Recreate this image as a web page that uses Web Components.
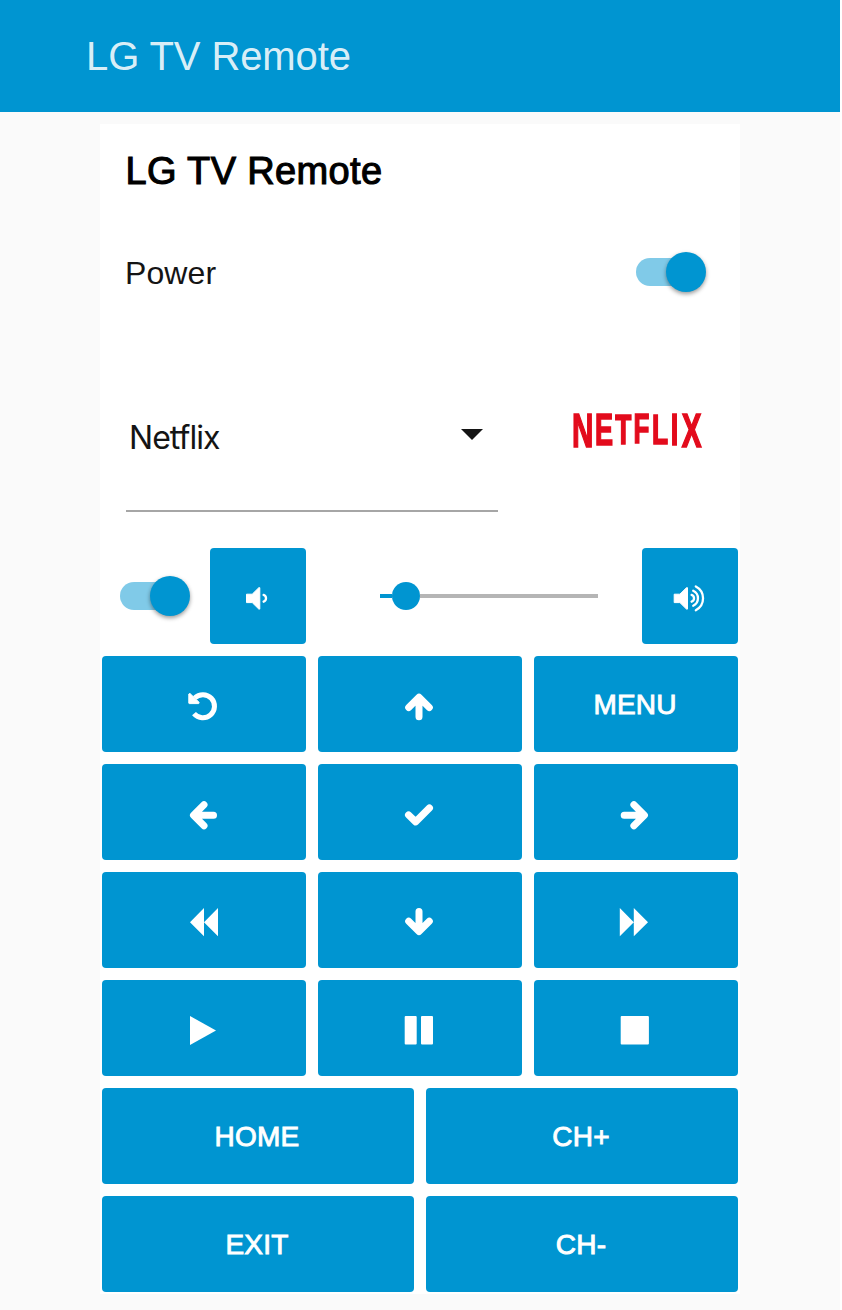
<!DOCTYPE html>
<html lang="en">
<head>
<meta charset="utf-8">
<title>LG TV Remote</title>
<style>
  html, body { margin: 0; background: #fff; }
  body { font-family: "Liberation Sans", Arial, sans-serif; }
</style>
</head>
<body>
<remote-page></remote-page>
<script>
const define = (name, html, setup) => {
  const template = document.createElement('template');
  template.innerHTML = html;
  customElements.define(name, class extends HTMLElement {
    constructor() {
      super();
      this.attachShadow({ mode: 'open' }).append(template.content.cloneNode(true));
    }
    connectedCallback() { if (setup) setup(this, this.shadowRoot); }
  });
};

const ICONS = {
  undo: '<path d="M8.700 10A11.600 11.600 0 1 1 8 25.700" fill="none" stroke="#fff" stroke-width="5"/><path d="M2.800 6v9a.6.6 0 0 0 .6.6h9.300l.5-1.200-2.700-2.600L4 5.500z" fill="#fff" stroke="#fff" stroke-linejoin="round"/>',
  up: '<path d="M17 28.800V10M6.700 19.500 17 9.200l10.300 10.300" class="arrow"/>',
  down: '<path d="M17 7.500V26M6.700 17.200 17 27.500l10.300-10.300" class="arrow"/>',
  left: '<path d="M27.500 19.300H9M18 8.800 7.500 19.300 18 29.800" class="arrow"/>',
  right: '<path d="M6.200 19.300H25M15.900 8.800 26.400 19.300 15.900 29.800" class="arrow"/>',
  check: '<path d="M6.600 19 13.700 25.800 27.400 12" class="check"/>',
  rewind: '<path d="M18 4v28.300L4 18.200zM32 4v28.300L18 18.200z" fill="#fff"/>',
  forward: '<path d="M1.800 4v28.300l14-14.100zM15.800 4v28.300l14.200-14.100z" fill="#fff"/>',
  play: '<path d="M4 4l26 14.400L4 33z" fill="#fff"/>',
  pause: '<rect x="2.700" y="4" width="12" height="28.600" rx="1" fill="#fff"/><rect x="19" y="4" width="12" height="28.600" rx="1" fill="#fff"/>',
  stop: '<rect x="2.700" y="4" width="28.200" height="28.600" rx="1" fill="#fff"/>',
  low: '<path d="M6.500 14.200h5.700l6.600-6.500h1v21.400h-1l-6.600-6.500H6.500z" class="speaker"/><path d="M23.600 14.900a3.600 3.600 0 0 1 0 6.800" class="wave"/>',
  high: '<path d="M2.200 14.200h5.700l6.600-6.500h1v21.400h-1l-6.600-6.500H2.200z" class="speaker"/><path d="M19.600 14.900a3.600 3.600 0 0 1 0 6.800M21.200 10.800a8.300 8.300 0 0 1 0 15M23.800 6.400a13.400 13.400 0 0 1 0 23.800" class="wave"/>'
};

define('app-bar', `
  <style>
    :host { display: flex; align-items: center; box-sizing: border-box; width: 840px; height: 112px;
      padding: 0 0 0 86px; background: #0095d1; color: rgba(255,255,255,.87); font-size: 40px; line-height: 46px; letter-spacing: -.1px; }
  </style><slot></slot>`);

define('toggle-switch', `
  <style>
    :host { display: flex; align-items: center; width: 70px; height: 40px; flex: none; }
    .track { display: flex; align-items: center; justify-content: flex-end; width: 70px; height: 28px;
      border-radius: 14px; background: linear-gradient(90deg, #80cae8 56px, transparent 56px); }
    .thumb { width: 40px; height: 40px; flex: none; border-radius: 50%; background: #0095d1; box-shadow: 0 2px 4px rgba(0,0,0,.4); }
  </style><div class="track"><div class="thumb"></div></div>`);

define('remote-button', `
  <style>
    :host { display: flex; align-items: center; justify-content: center; box-sizing: border-box; height: 96px;
      border-radius: 4px; background: #0095d1; color: #fff; font-size: 28px; line-height: 32px; letter-spacing: .2px; -webkit-text-stroke: .9px #fff; }
    .label { padding: 1px 2px 0 0; }
    svg { display: block; width: 36px; height: 36px; margin-top: 4px; }
    .arrow { fill: none; stroke: #fff; stroke-width: 7; stroke-linecap: round; stroke-linejoin: round; }
    .check { fill: none; stroke: #fff; stroke-width: 7.2; stroke-linecap: round; stroke-linejoin: round; }
    .speaker { fill: #fff; stroke: #fff; stroke-width: 1; stroke-linejoin: round; }
    .wave { fill: none; stroke: #fff; stroke-width: 2.3; stroke-linecap: round; }
  </style><div class="label"><slot></slot></div>`, (host, root) => {
    const icon = host.getAttribute('icon');
    if (icon) {
      const holder = document.createElement('template');
      holder.innerHTML = '<svg viewBox="0 0 36 36">' + ICONS[icon] + '</svg>';
      root.querySelector('.label').replaceWith(holder.content);
    }
  });

define('volume-slider', `
  <style>
    :host { display: flex; align-items: center; height: 28px; width: 218px; }
    .fill { width: 12px; height: 4px; background: #0095d1; }
    .knob { width: 28px; height: 28px; border-radius: 50%; background: #0095d1; }
    .rest { flex: 1; height: 4px; background: #b5b5b5; }
  </style><div class="fill"></div><div class="knob"></div><div class="rest"></div>`);

define('source-select', `
  <style>
    :host { display: flex; justify-content: space-between; box-sizing: border-box; width: 372px; height: 100px;
      padding: 7px 15px 0 3px; border-bottom: 2px solid #a6a6a6; color: #141414;
      font: 32px/38px Inter, sans-serif; letter-spacing: -.95px; }
    svg { width: 22px; height: 11px; margin-top: 9.500px; }
  </style><slot></slot><svg viewBox="0 0 22 11"><path d="M0 0h22L11 11z" fill="#141414"/></svg>`);

define('netflix-logo', `
  <style>
    :host { display: block; width: 136px; height: 44px; }
    svg { display: block; overflow: visible; filter: blur(.6px); }
    text { font-family: "Liberation Sans", sans-serif; font-weight: 700; fill: #e30b1c; stroke: #e30b1c; stroke-width: 1.7px; }
  </style>
  <svg width="136" height="44" viewBox="0 0 136 44"><text transform="scale(.61 1)"><tspan x="3.200" y="35.200" font-size="48.500">N</tspan><tspan x="40.900" y="32.600" font-size="44.400">E</tspan><tspan x="74.200" y="31.800" font-size="43.200">T</tspan><tspan x="104" y="31.400" font-size="42.600">F</tspan><tspan x="134.300" y="31.800" font-size="43.200">L</tspan><tspan x="165.300" y="32.600" font-size="44.400">I</tspan><tspan x="183.300" y="35.200" font-size="48.500">X</tspan></text></svg>`);

define('remote-card', `
  <style>
    :host { display: flex; flex-direction: column; box-sizing: border-box; width: 640px; height: 1170px; background: #fff; }
    h2 { margin: 0; padding: 24px 0 0 25.5px; font-weight: 400; font-size: 38px; line-height: 46px; color: #000; letter-spacing: .35px; -webkit-text-stroke: 1.1px #000; }
    .power { display: flex; justify-content: space-between; align-items: center; height: 40px; margin-top: 58px;
      padding: 0 34px 0 25px; font-size: 32px; color: #141414; letter-spacing: .1px; }
    .power span { padding-top: 2px; }
    .source { display: flex; justify-content: space-between; align-items: flex-start; height: 100px; margin-top: 120px; padding: 0 34px 0 26px; }
    .volume { display: flex; align-items: center; height: 96px; margin-top: 36px; padding: 0 2px 0 20px; }
    .volume remote-button { width: 96px; }
    .volume remote-button:nth-of-type(1) { margin-left: 20px; }
    volume-slider { margin: 0 44px 0 74px; }
    .keys { display: grid; grid-template-columns: repeat(6, 1fr); gap: 12px; padding: 12px 2px 0; }
    .keys remote-button { grid-column: span 2; }
    .keys .wide { grid-column: span 3; }
  </style>
  <h2>LG TV Remote</h2>
  <div class="power"><span>Power</span><toggle-switch></toggle-switch></div>
  <div class="source"><source-select>Netflix</source-select><netflix-logo></netflix-logo></div>
  <div class="volume">
    <toggle-switch></toggle-switch><remote-button icon="low"></remote-button>
    <volume-slider></volume-slider><remote-button icon="high"></remote-button>
  </div>
  <div class="keys">
    <remote-button icon="undo"></remote-button><remote-button icon="up"></remote-button><remote-button>MENU</remote-button>
    <remote-button icon="left"></remote-button><remote-button icon="check"></remote-button><remote-button icon="right"></remote-button>
    <remote-button icon="rewind"></remote-button><remote-button icon="down"></remote-button><remote-button icon="forward"></remote-button>
    <remote-button icon="play"></remote-button><remote-button icon="pause"></remote-button><remote-button icon="stop"></remote-button>
    <remote-button class="wide">HOME</remote-button><remote-button class="wide">CH+</remote-button>
    <remote-button class="wide">EXIT</remote-button><remote-button class="wide">CH-</remote-button>
  </div>`);

define('remote-page', `
  <style>
    :host { display: block; width: 842px; height: 1310px; overflow: hidden; }
    main { display: flex; justify-content: center; align-items: flex-start; box-sizing: border-box; width: 840px; height: 1198px; padding-top: 12px; background: #fafafa; }
  </style>
  <app-bar>LG TV Remote</app-bar>
  <main><remote-card></remote-card></main>`);
</script>
</body>
</html>
